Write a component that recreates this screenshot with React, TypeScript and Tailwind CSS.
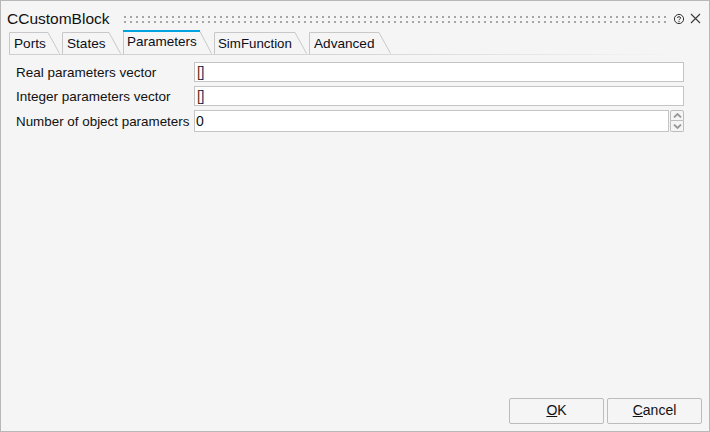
const font = { fontFamily: '"Liberation Sans", Arial, sans-serif' };

function Tab({ label, width, active, tight }: { label: string; width: number; active?: boolean; tight?: boolean }) {
  const h = active ? 24 : 22;
  const w = width;
  return (
    <div className={active ? "relative h-6 shrink-0" : "relative h-[22px] shrink-0"} style={{ width: w }}>
      <svg className="absolute left-0 top-0" width={w} height={h} fill="none">
        {active ? (
          <>
            <path d={`M${w - 12} 1.5 L${w - 0.5} ${h - 0.5}`} stroke="#c8c8c8" />
            <path d={`M0.5 ${h} V1`} stroke="#c8c8c8" />
            <path d={`M0 1 H${w - 12}`} stroke="#00a3e0" strokeWidth="2" />
          </>
        ) : (
          <path d={`M0.5 ${h} V0.5 H${w - 12} L${w - 0.5} ${h - 0.5}`} stroke="#c8c8c8" />
        )}
      </svg>
      <span
        className={
          active
            ? "absolute left-[4px] top-[3px] text-[13.5px] leading-[18px] text-[#0d0d1a]"
            : tight
              ? "absolute left-[4px] top-[3px] text-[13.3px] leading-[18px] text-[#0d0d1a]"
              : "absolute left-[5px] top-[3px] text-[13.6px] leading-[18px] text-[#0d0d1a]"
        }
      >
        {label}
      </span>
    </div>
  );
}

function Row({ label, value }: { label: string; value: React.ReactNode }) {
  return (
    <div className="flex h-5 items-center">
      <div className="w-[178px] pt-[1px] text-[13.5px] leading-[18px] text-[#111]">{label}</div>
      <div className="flex h-5 w-[490px] items-center border-[1.5px] border-[#c4c4c4] bg-white pl-[2px] text-[14px] text-[#111]">
        {value}
      </div>
    </div>
  );
}

function Grip() {
  return (
    <svg className="ml-[15px] mt-[1px] shrink-0" width="542" height="7">
      <defs>
        <pattern id="g" width="6" height="5" patternUnits="userSpaceOnUse">
          <rect x="0" y="0" width="2" height="2" fill="#a6a6a6" />
        </pattern>
      </defs>
      <rect width="542" height="7" fill="url(#g)" />
    </svg>
  );
}

const Brackets = (
  <span className="tracking-[-0.3px]">
    <span className="text-[#5e2a08]">[</span>
    <span className="text-[#0b2f60]">]</span>
  </span>
);

export default function App() {
  return (
    <div style={font} className="flex h-[432px] w-[710px] flex-col overflow-hidden border border-[#b8b8b8] bg-[#f5f5f5]">
      <div className="flex h-[29px] items-center pl-[6px] pt-[7px]">
        <span className="w-[102px] text-[15.5px] leading-[20px] text-[#111]">CCustomBlock</span>
        <Grip />
        <svg className="ml-[7px] mt-[-1px] shrink-0" width="12" height="12" viewBox="0 0 12 12" fill="none" stroke="#333">
          <circle cx="6" cy="6" r="4.6" />
          <path d="M4.4 5 C4.4 3.2 7.6 3.2 7.6 5 C7.6 6 6 6 6 7.2" />
          <path d="M6 8 V9.2" />
        </svg>
        <svg className="ml-[5px] mt-[-1px] shrink-0" width="11" height="11" viewBox="0 0 11 11" fill="none" stroke="#3a3a3a" strokeWidth="1.1">
          <path d="M1 1 L10 10 M10 1 L1 10" />
        </svg>
      </div>

      <div className="flex h-6 items-end gap-[2px] pl-[8px]">
        <Tab label="Ports" width={51} />
        <Tab label="States" width={59} />
        <Tab label="Parameters" width={89} active />
        <Tab label="SimFunction" width={93} tight />
        <Tab label="Advanced" width={82} />
      </div>
      <div className="ml-[8px] h-px w-[670px] bg-gradient-to-r from-[#cfcfcf] via-[#d5d5d5] to-[#f5f5f5]" />

      <div className="flex flex-col gap-[4px] pl-[15px] pt-[7px]">
        <Row label="Real parameters vector" value={Brackets} />
        <Row label="Integer parameters vector" value={Brackets} />
        <div className="flex h-[22px] items-center">
          <div className="w-[178px] pt-[1px] text-[13.4px] leading-[18px] text-[#111]">Number of object parameters</div>
          <div className="flex h-[22px] w-[475px] items-center border-[1.5px] border-[#c4c4c4] bg-white pl-[1px] text-[14px] text-[#111]">0</div>
          <div className="flex h-[22px] w-[15px] flex-col pl-[1px]">
            <div className="flex h-[11px] items-center justify-center rounded-t-[2px] border border-[#bdbdbd]">
              <svg width="9" height="5" fill="none" stroke="#999" strokeWidth="1.8"><path d="M1 4.5 L4.5 1 L8 4.5" /></svg>
            </div>
            <div className="flex h-[11px] items-center justify-center rounded-b-[2px] border border-t-0 border-[#bdbdbd]">
              <svg width="9" height="5" fill="none" stroke="#999" strokeWidth="1.8"><path d="M1 0.5 L4.5 4 L8 0.5" /></svg>
            </div>
          </div>
        </div>
      </div>

      <div className="mt-auto flex justify-end gap-[3px] pb-[7px] pr-[7px]">
        <button className="h-[26px] w-[95px] rounded-[2px] border border-[#bcbcbc] bg-[#f5f5f5] pb-[1px] text-[14px] text-[#111]">
          <span className="underline">O</span>K
        </button>
        <button className="h-[26px] w-[95px] rounded-[2px] border border-[#bcbcbc] bg-[#f5f5f5] pb-[1px] text-[14px] text-[#111]">
          <span className="underline">C</span>ancel
        </button>
      </div>
    </div>
  );
}
